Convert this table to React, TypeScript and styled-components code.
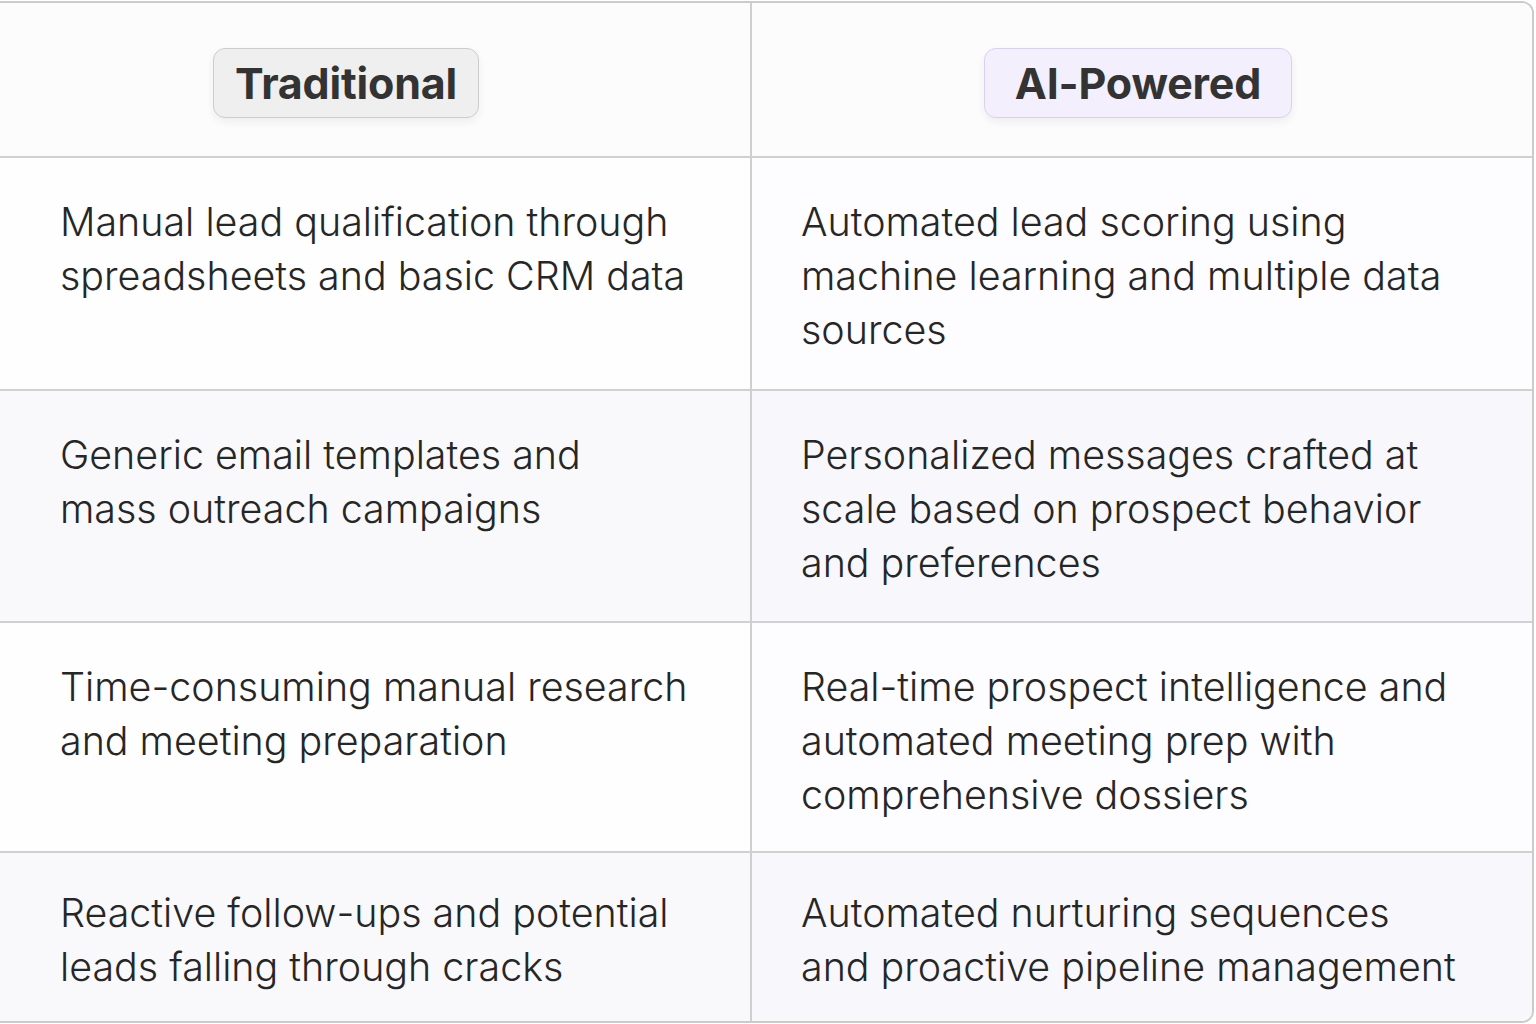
import React from 'react';
import styled, { createGlobalStyle } from 'styled-components';

// line breaks follow the reference layout
const rows: { traditional: string; ai: string }[] = [
  {
    traditional: 'Manual lead qualification through\nspreadsheets and basic CRM data',
    ai: 'Automated lead scoring using\nmachine learning and multiple data\nsources',
  },
  {
    traditional: 'Generic email templates and\nmass outreach campaigns',
    ai: 'Personalized messages crafted at\nscale based on prospect behavior\nand preferences',
  },
  {
    traditional: 'Time-consuming manual research\nand meeting preparation',
    ai: 'Real-time prospect intelligence and\nautomated meeting prep with\ncomprehensive dossiers',
  },
  {
    traditional: 'Reactive follow-ups and potential\nleads falling through cracks',
    ai: 'Automated nurturing sequences\nand proactive pipeline management',
  },
];

const GlobalStyle = createGlobalStyle`
  html, body {
    margin: 0;
    background: #ffffff;
    font-family: Inter, "Noto Sans", "Liberation Sans", sans-serif;
    -webkit-font-smoothing: antialiased;
  }
`;

const Page = styled.div`
  width: 1536px;
  height: 1024px;
  overflow: hidden;
  padding-top: 1px;
  box-sizing: border-box;
`;

// the table runs off the left edge of the shot, so it starts at -60px
const Table = styled.div`
  display: grid;
  grid-template-columns: 810px 1fr;
  grid-template-rows: 155px 233px 232px 230px 168px;
  width: 1594px;
  margin-left: -60px;
  border: 2px solid #cbcbcb;
  border-radius: 12px;
  overflow: hidden;
  box-sizing: border-box;
`;

const Cell = styled.div<{ side: 'left' | 'right'; shade: 'plain' | 'tint'; last?: boolean }>`
  box-sizing: border-box;
  border-bottom: ${(p) => (p.last ? 'none' : '2px solid #d0d0d0')};
  ${(p) => (p.side === 'left' ? 'border-right: 2px solid #cfcfcf;' : '')}
  padding-top: ${(p) => (p.last ? '33px' : '37px')};
  padding-left: ${(p) => (p.side === 'left' ? '118px' : '49px')};
  padding-right: 20px;
  white-space: pre-line;
  background: ${(p) =>
    p.shade === 'tint'
      ? p.side === 'left'
        ? '#f9f9fb'
        : '#f8f7fc'
      : p.side === 'left'
      ? '#fefefe'
      : '#fdfcff'};
  font-size: 39.4px;
  font-weight: 300;
  line-height: 54px;
  color: #262626;
`;

const HeadCell = styled.div<{ side: 'left' | 'right' }>`
  display: flex;
  align-items: center;
  justify-content: center;
  box-sizing: border-box;
  padding-top: 7px;
  padding-right: ${(p) => (p.side === 'right' ? '8px' : '0')};
  border-bottom: 2px solid #d0d0d0;
  ${(p) => (p.side === 'left' ? 'border-right: 2px solid #cfcfcf;' : '')}
  background: #fcfcfc;
`;

const Badge = styled.span<{ tone: 'grey' | 'violet' }>`
  display: inline-flex;
  align-items: center;
  justify-content: center;
  height: 70px;
  padding: 0 ${(p) => (p.tone === 'grey' ? '21px' : '30px')};
  box-sizing: border-box;
  border-radius: 12px;
  font-size: 43px;
  font-weight: 700;
  color: #333333;
  letter-spacing: -0.2px;
  background: ${(p) => (p.tone === 'grey' ? '#efefef' : '#f3effd')};
  border: 1.5px solid ${(p) => (p.tone === 'grey' ? '#cdcdcd' : '#d9d1ef')};
  box-shadow: 0 4px 8px rgba(0, 0, 0, 0.06);
`;

export default function App() {
  return (
    <Page>
      <GlobalStyle />
      <Table>
        <HeadCell side="left">
          <Badge tone="grey">Traditional</Badge>
        </HeadCell>
        <HeadCell side="right">
          <Badge tone="violet">AI-Powered</Badge>
        </HeadCell>
        {rows.map((row, i) => {
          const shade = i % 2 === 1 ? 'tint' : 'plain';
          const last = i === rows.length - 1;
          return (
            <React.Fragment key={i}>
              <Cell side="left" shade={shade} last={last}>
                {row.traditional}
              </Cell>
              <Cell side="right" shade={shade} last={last}>
                {row.ai}
              </Cell>
            </React.Fragment>
          );
        })}
      </Table>
    </Page>
  );
}
